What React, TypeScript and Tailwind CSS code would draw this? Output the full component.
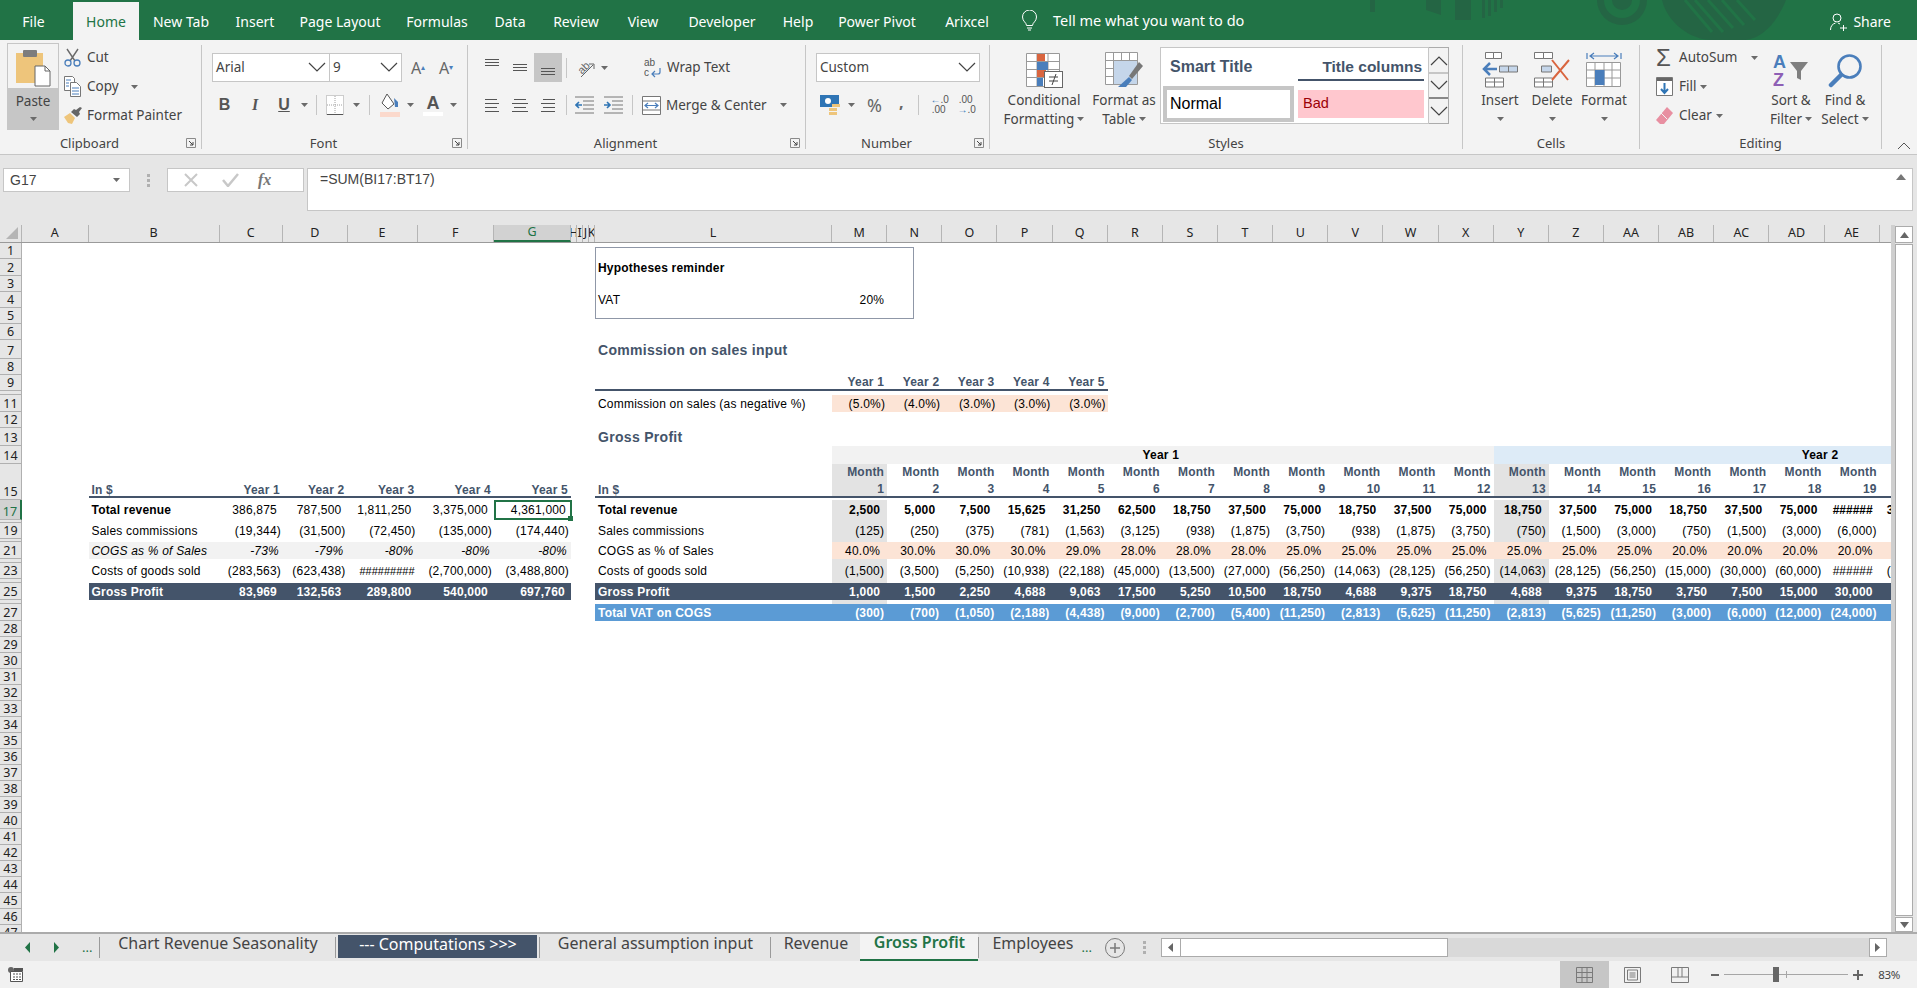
import React from "react";

const UI = "font-['Noto_Sans',sans-serif]";
const COLS =
  "grid grid-cols-[22px_66.5px_131px_63.5px_64.5px_70px_76.5px_77px_6px_6px_6px_6px_237px_repeat(19,55.15px)_1fr]";

const tabs = [
  { label: "New Tab", w: "w-[84px]" },
  { label: "Insert", w: "w-[64px]" },
  { label: "Page Layout", w: "w-[106px]" },
  { label: "Formulas", w: "w-[88px]" },
  { label: "Data", w: "w-[58px]" },
  { label: "Review", w: "w-[74px]" },
  { label: "View", w: "w-[60px]" },
  { label: "Developer", w: "w-[98px]" },
  { label: "Help", w: "w-[54px]" },
  { label: "Power Pivot", w: "w-[104px]" },
  { label: "Arixcel", w: "w-[76px]" },
];

// ---------- small ribbon drawings ----------
const Caret = ({ className = "" }: { className?: string }) => (
  <svg width="7" height="4" viewBox="0 0 7 4" className={`shrink-0 ${className}`}>
    <path d="M0 0h7L3.5 4z" fill="#6a6a6a" />
  </svg>
);

const Chevron = ({ up = false, className = "" }: { up?: boolean; className?: string }) => (
  <svg width="18" height="11" viewBox="0 0 18 11" className={className}>
    <path d={up ? "M1 10 9 2l8 8" : "M1 1l8 8 8-8"} fill="none" stroke="#444" strokeWidth="1.2" />
  </svg>
);

const Lines = ({ rows }: { rows: number[][] }) => (
  <svg width="18" height="18" viewBox="0 0 18 18">
    {rows.map((r, i) => (
      <rect key={i} x={r[0]} y={r[2]} width={r[1] - r[0]} height="1" fill="#555" />
    ))}
  </svg>
);

const Launcher = () => (
  <svg width="10" height="10" viewBox="0 0 10 10">
    <path d="M.5.5h9v9h-9z" fill="none" stroke="#8a8a8a" />
    <path d="M3 3l4 4M7 4v3H4" fill="none" stroke="#444" />
  </svg>
);

const PasteIcon = () => (
  <svg width="36" height="38" viewBox="0 0 36 38">
    <rect x="1" y="4" width="27" height="30" fill="#eec57b" />
    <rect x="8" y="1" width="14" height="7" rx="1" fill="#7d7d7d" />
    <path d="M20 17h10l5 5v15H20z" fill="#fff" stroke="#666" />
    <path d="M30 17v5h5" fill="none" stroke="#666" />
  </svg>
);

const ScissorsIcon = () => (
  <svg width="17" height="19" viewBox="0 0 17 19">
    <path d="M3 1l8 12M14 1 6 13" stroke="#6a6a6a" strokeWidth="1.4" fill="none" />
    <circle cx="4" cy="15" r="3" fill="none" stroke="#4a7ebb" strokeWidth="1.3" />
    <circle cx="13" cy="15" r="3" fill="none" stroke="#4a7ebb" strokeWidth="1.3" />
  </svg>
);

const CopyIcon = () => (
  <svg width="17" height="21" viewBox="0 0 17 21">
    <path d="M.5.5h8l2 2v12H.5z" fill="#fff" stroke="#777" />
    <path d="M6.5 6.5h6l4 4v10h-10z" fill="#fff" stroke="#777" />
    <path d="M2 4h5M2 7h3M2 10h3M8 12h7M8 15h7M8 18h7" stroke="#4a7ebb" />
  </svg>
);

const BrushIcon = () => (
  <svg width="18" height="17" viewBox="0 0 18 17">
    <path d="M0 10l6-4 5 5-3 6-4-1z" fill="#eec57b" />
    <path d="M7 5l3-3 2 1 4-3 2 1-3 4 1 2-3 3z" fill="#666" />
  </svg>
);

const BorderIcon = () => (
  <svg width="18" height="20" viewBox="0 0 18 20">
    <path d="M.5.5h17v19H.5z" fill="#fff" stroke="#a0a0a0" strokeDasharray="1 1" />
    <path d="M9 1v18M1 10h16" stroke="#a0a0a0" strokeDasharray="1 1" />
    <path d="M1 19.5h16" stroke="#555" />
  </svg>
);

const FillIcon = () => (
  <svg width="20" height="24" viewBox="0 0 20 24">
    <path d="M7 1l-5 9 6 6 6-5z" fill="#fff" stroke="#555" />
    <path d="M14 5l4 4v5h-3z" fill="#4a7ebb" />
    <rect y="19" width="20" height="5" fill="#fbd9cc" />
  </svg>
);

const OrientIcon = () => (
  <svg width="20" height="20" viewBox="0 0 20 20">
    <text x="1" y="13" fontSize="11" fill="#666" fontFamily="Liberation Sans" transform="rotate(-45 8 9)">ab</text>
    <path d="M5 19 17 7M13 6h5v5" fill="none" stroke="#666" />
  </svg>
);

const WrapIcon = () => (
  <svg width="17" height="20" viewBox="0 0 17 20">
    <text x="0" y="8" fontSize="10" fill="#555" fontFamily="Liberation Sans">ab</text>
    <text x="0" y="18" fontSize="10" fill="#555" fontFamily="Liberation Sans">c</text>
    <path d="M16 10v4a2 2 0 0 1-2 2H8m3-3-3 3 3 3" fill="none" stroke="#4a7ebb" strokeWidth="1.2" />
  </svg>
);

const MergeIcon = () => (
  <svg width="19" height="19" viewBox="0 0 19 19">
    <path d="M.5.5h18v18H.5zM.5 5h18M.5 14h18" fill="#fff" stroke="#777" />
    <path d="M3 9.5h13M6 7 3 9.5 6 12M13 7l3 2.5-3 2.5" fill="none" stroke="#4a7ebb" strokeWidth="1.2" />
  </svg>
);

const CondIcon = () => (
  <svg width="37" height="35" viewBox="0 0 37 35">
    <path d="M.5.5h33v33H.5zM.5 8.5h33M.5 16.5h33M.5 24.5h33M11 .5v33M22 .5v33" fill="#fff" stroke="#999" />
    <rect x="11" y="1" width="8" height="7" fill="#d9653f" />
    <rect x="11" y="9" width="11" height="8" fill="#4a7ebb" />
    <rect x="11" y="17" width="9" height="7" fill="#d9653f" />
    <rect x="11" y="25" width="6" height="8" fill="#4a7ebb" />
    <rect x="18.5" y="18.5" width="18" height="16" fill="#fff" stroke="#666" />
    <path d="M23 24h9M23 28h9M30 21l-4 11" stroke="#444" />
  </svg>
);

const TableIcon = () => (
  <svg width="38" height="36" viewBox="0 0 38 36">
    <path d="M.5.5h32v32H.5zM.5 8.5h32M.5 16.5h32M.5 24.5h32M8.5.5v32M16.5.5v32M24.5.5v32" fill="#fff" stroke="#999" />
    <rect x="9" y="9" width="23" height="23" fill="#c5d6ea" />
    <path d="M34 10 24 24l3 3 11-13z" fill="#777" />
    <path d="M24 25l3 3-6 7h-8z" fill="#4a7ebb" />
  </svg>
);

const InsertIcon = () => (
  <svg width="36" height="36" viewBox="0 0 36 36">
    <path d="M3.5.5h8v6h-8zM11.5.5h8v6h-8zM3.5 26h18v9h-18zM12.5 26v9M3.5 30h18" fill="#fff" stroke="#777" />
    <path d="M17.5 14h9v6h-9zM26.5 14h9v6h-9z" fill="#c5d6ea" stroke="#777" />
    <path d="M15 17H3M8 11l-6 6 6 6" fill="none" stroke="#4a7ebb" strokeWidth="2.5" />
  </svg>
);

const DeleteIcon = () => (
  <svg width="37" height="36" viewBox="0 0 37 36">
    <path d="M.5.5h9v6h-9zM9.5.5h9v6h-9zM.5 26h18v9H.5zM9.5 26v9M.5 30h18" fill="#fff" stroke="#777" />
    <path d="M7.5 14h10v6h-10z" fill="#c5d6ea" stroke="#777" />
    <path d="M18 8l16 20M35 8 18 28" stroke="#d9653f" strokeWidth="2" />
  </svg>
);

const FormatIcon = () => (
  <svg width="36" height="37" viewBox="0 0 36 37">
    <path d="M1 1v6M35 1v6M4 4h28M8 1 4 4l4 3M28 1l4 3-4 3" fill="none" stroke="#4a7ebb" strokeWidth="1.2" />
    <path d="M.5 10.5h34v24H.5zM.5 18h34M.5 26h34M9 10.5v24M18 10.5v24M26 10.5v24" fill="#fff" stroke="#999" />
    <rect x="9" y="18" width="9.5" height="15" fill="#4a7ebb" />
  </svg>
);

const SortIcon = () => (
  <svg width="36" height="34" viewBox="0 0 36 34">
    <text x="0" y="15" fontSize="18" fontWeight="700" fill="#4a7ebb" fontFamily="Liberation Sans">A</text>
    <text x="0" y="33" fontSize="18" fontWeight="700" fill="#8e5fb5" fontFamily="Liberation Sans">Z</text>
    <path d="M17 9h18l-7 9v9l-4-2v-7z" fill="#7f7f7f" />
  </svg>
);

const SearchIcon = () => (
  <svg width="35" height="35" viewBox="0 0 35 35">
    <circle cx="21.5" cy="13.5" r="11" fill="none" stroke="#4a7ebb" strokeWidth="2.6" />
    <path d="M13 22 3 32" stroke="#4a7ebb" strokeWidth="4.5" strokeLinecap="round" />
  </svg>
);

const FillDownIcon = () => (
  <svg width="17" height="19" viewBox="0 0 17 19">
    <path d="M.5.5h16v18H.5z" fill="#fff" stroke="#777" />
    <rect x="1" y="1" width="15" height="3" fill="#666" />
    <path d="M8.5 6v10M5 12l3.5 4 3.5-4" fill="none" stroke="#2f75b5" strokeWidth="2" />
  </svg>
);

const EraserIcon = () => (
  <svg width="17" height="17" viewBox="0 0 17 17">
    <path d="M11 0l6 6-9 11H4l-4-4z" fill="#e88fa1" />
    <path d="M5 6l6 6" stroke="#f3f3f3" />
  </svg>
);

const BigAction = ({ icon, l1, l2, caret, w }: { icon: React.ReactNode; l1: string; l2?: string; caret?: boolean; w: string }) => (
  <div className={`${w} pt-[5px] flex flex-col items-center`}>
    <div className="h-[40px] flex items-center">{icon}</div>
    <div className="h-[20px] leading-[20px] whitespace-nowrap">{l1}</div>
    <div className="h-[18px] flex items-center justify-center gap-[3px] whitespace-nowrap">
      {l2}
      {caret && <Caret />}
    </div>
  </div>
);

const Group = ({ w, label, launcher, children }: { w: string; label: string; launcher?: boolean; children: React.ReactNode }) => (
  <div className={`${w} shrink-0 h-full py-[5px]`}>
    <div className="h-full flex flex-col border-r border-[#c6c6c6]">
      <div className="flex-1">{children}</div>
      <div className={`relative h-[14px] -mb-[2px] flex items-center justify-center text-[13px] text-[#444] ${launcher ? "pr-[22px]" : ""}`}>
        {label}
        {launcher && (
          <span className="absolute right-[5px] top-[1px]">
            <Launcher />
          </span>
        )}
      </div>
    </div>
  </div>
);

const Ribbon = () => (
  <div className={`${UI} flex h-[115px] bg-[#f3f3f3] border-b border-[#c6c6c6] text-[13.5px] text-[#444]`}>
    <Group w="w-[202px]" label="Clipboard" launcher>
      <div className="flex pl-[7px] -mt-[2px]">
        <div className="w-[52px] h-[87px] flex flex-col">
          <div className="h-[45px] border border-[#c6c6c6] border-b-0 flex items-center justify-center pt-[3px]">
            <PasteIcon />
          </div>
          <div className="flex-1 bg-[#c6c6c6] flex flex-col items-center pt-[3px]">
            <span className="leading-[20px]">Paste</span>
            <Caret className="mt-[6px]" />
          </div>
        </div>
        <div className="ml-[5px] flex flex-col">
          <div className="h-[29px] flex items-center">
            <span className="w-[23px]"><ScissorsIcon /></span>Cut
          </div>
          <div className="h-[29px] flex items-center">
            <span className="w-[23px]"><CopyIcon /></span>Copy<Caret className="ml-[12px]" />
          </div>
          <div className="h-[29px] flex items-center">
            <span className="w-[23px]"><BrushIcon /></span>Format Painter
          </div>
        </div>
      </div>
    </Group>

    <Group w="w-[266px]" label="Font" launcher>
      <div className="flex items-center pl-[10px] pt-[8px]">
        <div className="w-[118px] h-[29px] bg-white border border-[#c6c6c6] flex items-center justify-between pl-[3px] pr-[3px]">
          Arial<Chevron />
        </div>
        <div className="w-[72px] h-[29px] bg-white border border-l-0 border-[#c6c6c6] flex items-center justify-between pl-[3px] pr-[3px]">
          9<Chevron />
        </div>
        <span className="ml-[9px] w-[22px] text-[16px] leading-none text-[#666]">A<sup className="text-[#4a7ebb] text-[8px]">▴</sup></span>
        <span className="ml-[6px] text-[16px] leading-none text-[#666]">A<sup className="text-[#4a7ebb] text-[8px]">▾</sup></span>
      </div>
      <div className="flex items-center h-[28px] mt-[9px] pl-[10px] text-[16px]">
        <b className="w-[25px] text-center font-['Liberation_Sans',sans-serif] text-[#555]">B</b>
        <i className="w-[36px] text-center font-['Liberation_Serif',serif] font-bold text-[#555]">I</i>
        <u className="w-[22px] text-center font-['Liberation_Sans',sans-serif] font-bold text-[#555]">U</u>
        <Caret className="ml-[6px]" />
        <span className="ml-[8px] w-px h-[20px] bg-[#c6c6c6]" />
        <span className="ml-[9px]"><BorderIcon /></span>
        <Caret className="ml-[9px]" />
        <span className="ml-[9px] w-px h-[20px] bg-[#c6c6c6]" />
        <span className="ml-[10px]"><FillIcon /></span>
        <Caret className="ml-[7px]" />
        <span className="ml-[9px] flex flex-col items-center w-[20px]">
          <b className="font-['Liberation_Sans',sans-serif] text-[18px] leading-[18px] text-[#555]">A</b>
          <span className="w-[20px] h-[4px] bg-white" />
        </span>
        <Caret className="ml-[7px]" />
      </div>
    </Group>

    <Group w="w-[338px]" label="Alignment" launcher>
      <div className="flex items-center pl-[15px] pt-[8px] h-[37px]">
        <span className="w-[28px] -mt-[3px]"><Lines rows={[[2, 16, 2], [2, 16, 5], [2, 16, 8]]} /></span>
        <span className="w-[28px]"><Lines rows={[[2, 16, 5], [2, 16, 8], [2, 16, 11]]} /></span>
        <span className="-ml-[5px] w-[28px] h-[29px] bg-[#c6c6c6] flex items-center justify-center pt-[3px]"><Lines rows={[[2, 16, 8], [2, 16, 11], [2, 16, 14]]} /></span>
        <span className="ml-[4px] w-px h-[20px] bg-[#c6c6c6]" />
        <span className="ml-[9px]"><OrientIcon /></span>
        <Caret className="ml-[5px]" />
        <span className="ml-[36px]"><WrapIcon /></span>
        <span className="ml-[6px]">Wrap Text</span>
      </div>
      <div className="flex items-center h-[28px] mt-[9px] pl-[15px]">
        <span className="w-[28px]"><Lines rows={[[2, 14, 3], [2, 16, 7], [2, 14, 11], [2, 16, 15]]} /></span>
        <span className="w-[28px]"><Lines rows={[[3, 15, 3], [1, 17, 7], [3, 15, 11], [1, 17, 15]]} /></span>
        <span className="w-[26px]"><Lines rows={[[4, 16, 3], [2, 16, 7], [4, 16, 11], [2, 16, 15]]} /></span>
        <span className="ml-[1px] w-px h-[20px] bg-[#c6c6c6]" />
        <span className="ml-[8px]">
          <svg width="19" height="18" viewBox="0 0 19 18"><path d="M0 1h19M8 5h11M8 9h11M8 13h11M0 17h19" stroke="#777" /><path d="M7 9H1m3-3L1 9l3 3" fill="none" stroke="#2f75b5" strokeWidth="1.6" /></svg>
        </span>
        <span className="ml-[9.5px]">
          <svg width="19" height="18" viewBox="0 0 19 18"><path d="M0 1h19M8 5h11M8 9h11M8 13h11M0 17h19" stroke="#777" /><path d="M0 9h6m-3-3 3 3-3 3" fill="none" stroke="#2f75b5" strokeWidth="1.6" /></svg>
        </span>
        <span className="ml-[9.5px] w-px h-[20px] bg-[#c6c6c6]" />
        <span className="ml-[9px]"><MergeIcon /></span>
        <span className="ml-[5px]">Merge &amp; Center</span>
        <Caret className="ml-[13px]" />
      </div>
    </Group>

    <Group w="w-[184px]" label="Number" launcher>
      <div className="pl-[10px] pt-[8px]">
        <div className="w-[164px] h-[29px] bg-white border border-[#c6c6c6] flex items-center justify-between pl-[3px] pr-[3px]">
          Custom<Chevron />
        </div>
      </div>
      <div className="flex items-center h-[28px] mt-[9px] pl-[14px]">
        <svg width="20" height="20" viewBox="0 0 20 20"><rect width="19" height="12" fill="#2f75b5" /><circle cx="8" cy="6" r="3" fill="#fff" /><rect x="12" y="9" width="8" height="3" fill="#eec57b" /><rect x="9" y="13" width="8" height="3" fill="#eec57b" /><rect x="9" y="17" width="8" height="3" fill="#eec57b" /></svg>
        <Caret className="ml-[8px]" />
        <span className="ml-[12px] text-[18px] text-[#666]">%</span>
        <span className="ml-[17px] text-[16px] font-bold text-[#666] -mt-[6px]">,</span>
        <span className="ml-[14px] w-px h-[20px] bg-[#c6c6c6]" />
        <span className="ml-[12px] w-[15px] font-['Liberation_Sans',sans-serif] text-[10px] leading-[10px] text-[#555] text-right"><span className="text-[#2f75b5] font-bold">←</span>.0<br />.00</span>
        <span className="ml-[12px] w-[15px] font-['Liberation_Sans',sans-serif] text-[10px] leading-[10px] text-[#555] text-right">.00<br /><span className="text-[#2f75b5] font-bold">→</span>.0</span>
      </div>
    </Group>

    <Group w="w-[473px]" label="Styles">
      <div className="flex">
        <BigAction w="w-[108px]" icon={<CondIcon />} l1="Conditional" l2="Formatting" caret />
        <div className="-ml-[13px] w-[78px]"><BigAction w="w-[78px]" icon={<TableIcon />} l1="Format as" l2="Table" caret /></div>
        <div className="-ml-[3px] mt-[2px] flex">
          <div className="w-[269px] h-[77px] bg-white border border-[#c6c6c6] grid grid-cols-[137px_126px] grid-rows-[38px_37px] font-['Liberation_Sans',sans-serif]">
            <div className="pl-[9px] flex items-center font-bold text-[#44546a] text-[16px]">Smart Title</div>
            <div className="flex items-end justify-end pr-[2px] pb-[3px] font-bold text-[#44546a] text-[15.5px] leading-[18px] border-b-2 border-[#44546a] mb-[5px]">Title columns</div>
            <div className="ml-[2px] mr-[4px] mb-[1px] border-4 border-[#c6c6c6] pl-[3px] flex items-center text-[16px] text-black">Normal</div>
            <div className="mb-[5px] mt-[4px] bg-[#ffc7ce] text-[#9c0006] pl-[5px] flex items-center text-[14.5px]">Bad</div>
          </div>
          <div className="w-[20px] h-[77px] flex flex-col border border-l-0 border-[#ababab]">
            <div className="h-[26px] flex items-center justify-center border-b-2 border-[#c6c6c6] bg-[#f3f3f3]"><Chevron up /></div>
            <div className="h-[24px] flex items-center justify-center border-b border-[#888] bg-[#f3f3f3]"><Chevron /></div>
            <div className="flex-1 flex items-center justify-center border-t border-[#888] bg-[#f3f3f3]"><Chevron /></div>
          </div>
        </div>
      </div>
    </Group>

    <Group w="w-[177px]" label="Cells">
      <div className="flex pl-[11px]">
        <BigAction w="w-[52px]" icon={<InsertIcon />} l1="Insert" caret />
        <BigAction w="w-[52px]" icon={<DeleteIcon />} l1="Delete" caret />
        <BigAction w="w-[52px]" icon={<FormatIcon />} l1="Format" caret />
      </div>
    </Group>

    <Group w="w-[242px]" label="Editing">
      <div className="flex">
        <div className="ml-[16px] w-[108px] -mt-[2px] flex flex-col whitespace-nowrap">
          <div className="h-[29px] flex items-center"><span className="w-[23px] text-[24px] leading-none text-[#555] font-['Liberation_Sans',sans-serif]">Σ</span>AutoSum<Caret className="ml-[14px]" /></div>
          <div className="h-[29px] flex items-center"><span className="w-[23px]"><FillDownIcon /></span>Fill<Caret className="ml-[4px]" /></div>
          <div className="h-[29px] flex items-center"><span className="w-[23px]"><EraserIcon /></span>Clear<Caret className="ml-[4px]" /></div>
        </div>
        <BigAction w="w-[54px]" icon={<SortIcon />} l1="Sort &" l2="Filter" caret />
        <BigAction w="w-[54px]" icon={<SearchIcon />} l1="Find &" l2="Select" caret />
      </div>
    </Group>

    <div className="flex-1 flex items-end justify-end pr-[6px] pb-[4px]">
      <svg width="14" height="8" viewBox="0 0 14 8"><path d="M1 7l6-6 6 6" fill="none" stroke="#555" /></svg>
    </div>
  </div>
);

const TitleBar = () => (
  <div className={`${UI} relative h-[40px] bg-[#217346] text-white text-[14px] overflow-hidden flex items-end`}>
    {/* faint artwork behind the tabs */}
    <svg className="absolute left-0 top-0" width="1917" height="40" viewBox="0 0 1917 40" fill="#246544">
      <rect x="1370" y="0" width="5" height="12" />
      <path d="M1426 0v10l15 5V0z" />
      <rect x="1455" y="0" width="16" height="20" />
      <rect x="1482" y="0" width="3" height="18" />
      <rect x="1488" y="0" width="3" height="16" />
      <rect x="1494" y="0" width="3" height="12" />
      <rect x="1500" y="0" width="3" height="8" />
      <path d="M1597 0a25 25 0 0 0 50 0h-7a18 18 0 0 1-36 0z" />
      <path d="M1612 0a10 10 0 0 0 20 0z" />
      <path d="M1662 0c5 22 28 40 50 40h30c20 0 35-18 44-40z" />
      <g stroke="#217346" strokeWidth="3">
        <path d="M1685 0l27 32M1695 0l28 32M1708 0l25 28M1722 0l22 25M1737 0l18 20" />
      </g>
    </svg>
    <div className="relative flex items-end h-[38px]">
      <div className="w-[67px] mr-[6px] h-[38px] flex items-center justify-center">File</div>
      <div className="w-[66px] h-[38px] bg-[#f3f3f3] text-[#217346] flex items-center justify-center">Home</div>
      {tabs.map((t) => (
        <div key={t.label} className={`${t.w} h-[38px] flex items-center justify-center`}>{t.label}</div>
      ))}
      <svg className="ml-[17px] mb-[9px]" width="15" height="21" viewBox="0 0 15 21" fill="none" stroke="#fff">
        <path d="M4.5 15.5c0-3-4-4-4-8.5a7 7 0 0 1 14 0c0 4.5-4 5.5-4 8.5zM5 18h5M6 20h3" />
      </svg>
      <div className="ml-[16px] h-[38px] flex items-center text-[14.5px]">Tell me what you want to do</div>
    </div>
    <div className="relative ml-auto mr-[26px] mb-[8px] flex items-center gap-[6px]">
      <svg width="17" height="18" viewBox="0 0 17 18" fill="none" stroke="#fff">
        <circle cx="7" cy="5" r="4" />
        <path d="M.5 17c0-4 2-6 5-7M8 10l2 1M10 15h7M13.5 12v6" />
      </svg>
      Share
    </div>
  </div>
);

const FormulaBar = () => (
  <div className="h-[70px] bg-[#e6e6e6] flex items-start pt-[13px] pl-[3px]">
    <div className="w-[127px] h-[24px] bg-white border border-[#c6c6c6] flex items-center justify-between pl-[6px] pr-[9px] text-[14px] text-[#444] font-['Liberation_Sans',sans-serif]">
      G17<Caret />
    </div>
    <div className="w-[37px] h-[24px] flex flex-col items-center justify-center gap-[2px]">
      <span className="w-[3px] h-[3px] bg-[#b0b0b0]" />
      <span className="w-[3px] h-[3px] bg-[#b0b0b0]" />
      <span className="w-[3px] h-[3px] bg-[#b0b0b0]" />
    </div>
    <div className="w-[137px] h-[24px] bg-white border border-[#c6c6c6] flex items-center">
      <svg className="ml-[16px]" width="14" height="14" viewBox="0 0 14 14"><path d="M1 1l12 12M13 1 1 13" stroke="#c8c8c8" strokeWidth="2" /></svg>
      <svg className="ml-[24px]" width="17" height="14" viewBox="0 0 17 14"><path d="M1 7l5 6L16 1" fill="none" stroke="#c8c8c8" strokeWidth="2.5" /></svg>
      <i className="ml-[19px] font-['Liberation_Serif',serif] font-bold text-[16px] leading-none text-[#777]">fx</i>
    </div>
    <div className="ml-[3px] w-[1606px] h-[43px] bg-white border border-[#c6c6c6] flex justify-between pl-[12px] pr-[6px] font-['Liberation_Sans',sans-serif] text-[14px] text-[#444]">
      =SUM(BI17:BT17)
      <svg className="mt-[5px]" width="10" height="6" viewBox="0 0 10 6"><path d="M0 6l5-6 5 6z" fill="#777" /></svg>
    </div>
  </div>
);

const colLabels = ["A", "B", "C", "D", "E", "F", "G", "H", "I", "J", "K", "L", "M", "N", "O", "P", "Q", "R", "S", "T", "U", "V", "W", "X", "Y", "Z", "AA", "AB", "AC", "AD", "AE"];

const ColHeader = () => (
  <div className={`${COLS} ${UI} h-[18px] bg-[#e6e6e6] border-b border-[#9a9a9a] text-[12.5px] text-[#222]`}>
    <div className="border-r border-[#b5b5b5] flex items-end justify-end pr-[3px] pb-[3px]">
      <svg width="12" height="12" viewBox="0 0 12 12"><path d="M12 0v12H0z" fill="#b5b5b5" /></svg>
    </div>
    {colLabels.map((c) => (
      <div key={c} className={`flex items-center justify-center overflow-hidden border-r border-[#b5b5b5] ${c === "G" ? "bg-[#d2d2d2] text-[#217346] border-b-2 border-b-[#217346]" : ""}`}>{c}</div>
    ))}
    <div />
  </div>
);

// ---------- one sheet row ----------
const Row = ({ n, h, sel, className = "", children }: { n: number; h: string; sel?: boolean; className?: string; children?: React.ReactNode }) => (
  <div className={`${COLS} ${h} ${className} overflow-hidden`}>
    <div className={`${UI} h-full overflow-hidden flex items-end justify-center border-b border-r text-[12.5px] leading-[15px] tracking-normal ${sel ? "bg-[#d2d2d2] text-[#217346] border-b-[#b5b5b5] border-r-2 border-r-[#217346]" : "bg-[#e6e6e6] text-[#222] border-[#b0b0b0]"}`}>
      {n}
    </div>
    {children}
  </div>
);

const NUM = "flex items-end justify-end whitespace-nowrap leading-[14px]";
const LBL = "flex items-end pl-[3px] whitespace-nowrap leading-[14px]";

const gray = (i: number) => i === 0 || i === 12;

const months = Array.from({ length: 19 }, (_, i) => i + 1);
const revenue = ["2,500", "5,000", "7,500", "15,625", "31,250", "62,500", "18,750", "37,500", "75,000", "18,750", "37,500", "75,000", "18,750", "37,500", "75,000", "18,750", "37,500", "75,000"];
const commissions = ["(125)", "(250)", "(375)", "(781)", "(1,563)", "(3,125)", "(938)", "(1,875)", "(3,750)", "(938)", "(1,875)", "(3,750)", "(750)", "(1,500)", "(3,000)", "(750)", "(1,500)", "(3,000)", "(6,000)"];
const pct = ["40.0%", "30.0%", "30.0%", "30.0%", "29.0%", "28.0%", "28.0%", "28.0%", "25.0%", "25.0%", "25.0%", "25.0%", "25.0%", "25.0%", "25.0%", "20.0%", "20.0%", "20.0%", "20.0%"];
const cogs = ["(1,500)", "(3,500)", "(5,250)", "(10,938)", "(22,188)", "(45,000)", "(13,500)", "(27,000)", "(56,250)", "(14,063)", "(28,125)", "(56,250)", "(14,063)", "(28,125)", "(56,250)", "(15,000)", "(30,000)", "(60,000)"];
const gross = ["1,000", "1,500", "2,250", "4,688", "9,063", "17,500", "5,250", "10,500", "18,750", "4,688", "9,375", "18,750", "4,688", "9,375", "18,750", "3,750", "7,500", "15,000", "30,000"];
const vat = ["(300)", "(700)", "(1,050)", "(2,188)", "(4,438)", "(9,000)", "(2,700)", "(5,400)", "(11,250)", "(2,813)", "(5,625)", "(11,250)", "(2,813)", "(5,625)", "(11,250)", "(3,000)", "(6,000)", "(12,000)", "(24,000)"];

// thin hidden rows still show the grey month columns
const Tiny = ({ n, h }: { n: number; h: string }) => (
  <Row n={n} h={h}>
    <div className="col-start-14 bg-[#e3e3e3]" />
    <div className="col-start-26 bg-[#e3e3e3]" />
  </Row>
);

const Sheet = () => (
  <div className="relative w-[1891px] h-[689px] overflow-hidden bg-white font-['Liberation_Sans',sans-serif] text-[12px] tracking-[0.2px] text-black">
    {/* floating text box */}
    <div className="absolute left-[595px] top-[4px] w-[319px] h-[72px] border border-[#8f97a7] pointer-events-none" />

    <Row n={1} h="h-[16px]" />
    <Row n={2} h="h-[17px]"><div className={`col-start-13 font-bold ${LBL} pb-[1px]`}>Hypotheses reminder</div></Row>
    <Row n={3} h="h-[16px]" />
    <Row n={4} h="h-[16px]">
      <div className={`col-start-13 ${LBL} pb-[1px]`}>VAT</div>
      <div className={`${NUM} pr-[3px] pb-[1px]`}>20%</div>
    </Row>
    <Row n={5} h="h-[16px]" />
    <Row n={6} h="h-[16px]" />
    <Row n={7} h="h-[18.5px]"><div className={`col-start-13 flex items-end pl-[3px] whitespace-nowrap text-[14px] font-bold text-[#44546a] leading-[17px] tracking-[0.3px]`}>Commission on sales input</div></Row>
    <Row n={8} h="h-[16px]" />
    <Row n={9} h="h-[16.5px]">
      <div className="col-start-13 border-b-2 border-[#44546a]" />
      {["Year 1", "Year 2", "Year 3", "Year 4", "Year 5"].map((y) => (
        <div key={y} className={`${NUM} pr-[3px] font-bold text-[#44546a] border-b-2 border-[#44546a]`}>{y}</div>
      ))}
    </Row>
    <Row n={10} h="h-[4px]" />
    <Row n={11} h="h-[16.5px]">
      <div className={`col-start-13 ${LBL} pb-[1px]`}>Commission on sales (as negative %)</div>
      {["(5.0%)", "(4.0%)", "(3.0%)", "(3.0%)", "(3.0%)"].map((v, i) => (
        <div key={i} className={`${NUM} pr-[2px] pb-[1px] bg-[#fce4d6]`}>{v}</div>
      ))}
    </Row>
    <Row n={12} h="h-[16px]" />
    <Row n={13} h="h-[18.5px]"><div className={`col-start-13 flex items-end pl-[3px] whitespace-nowrap text-[14px] font-bold text-[#44546a] leading-[18px] tracking-[0.3px]`}>Gross Profit</div></Row>
    <Row n={14} h="h-[17.5px]">
      <div className="col-start-14 col-span-12 bg-[#f2f2f2] flex items-center justify-center pr-[4px] font-bold">Year 1</div>
      <div className="col-span-8 bg-[#ddebf7] flex items-center pl-[308px] font-bold">Year 2</div>
    </Row>
    <Row n={15} h="h-[32px]">
      <div className={`col-start-3 ${LBL} pb-[3px] font-bold text-[#44546a]`}>In $</div>
      {["Year 1", "Year 2", "Year 3", "Year 4", "Year 5"].map((y) => (
        <div key={y} className={`${NUM} pr-[3px] pb-[3px] font-bold text-[#44546a]`}>{y}</div>
      ))}
      <div className={`col-start-13 ${LBL} pb-[3px] font-bold text-[#44546a]`}>In $</div>
      {months.map((m, i) => (
        <div key={m} className={`flex flex-col items-end justify-end pr-[3px] pb-[2px] leading-[17px] font-bold text-[#44546a] ${gray(i) ? "bg-[#e3e3e3]" : ""}`}>
          <span>Month</span>
          <span>{m}</span>
        </div>
      ))}
    </Row>
    <Row n={16} h="h-[4.5px]">
      <div className="col-start-3 col-span-6 border-t-2 border-[#44546a]" />
      <div className="col-start-13 col-span-21 border-t-2 border-[#44546a]" />
    </Row>
    <Row n={17} h="h-[19.5px]" sel className="!overflow-visible">
      <div className={`col-start-3 ${LBL} pb-[3px] font-bold`}>Total revenue</div>
      {["386,875", "787,500", "1,811,250", "3,375,000"].map((v) => (
        <div key={v} className={`${NUM} pr-[6px] pb-[3px]`}>{v}</div>
      ))}
      <div className="relative -mr-[1px] flex items-center justify-end pr-[4px] border-2 border-[#217346] leading-[14px]">
        4,361,000
        <span className="absolute -right-[3px] -bottom-[3px] w-[5px] h-[5px] bg-[#217346]" />
      </div>
      <div className={`col-start-13 ${LBL} pb-[3px] font-bold`}>Total revenue</div>
      {revenue.map((v, i) => (
        <div key={i} className={`${NUM} pr-[7px] pb-[3px] font-bold ${gray(i) ? "bg-[#e3e3e3]" : ""}`}>{v}</div>
      ))}
      <div className={`${NUM} pr-[7px] pb-[3px] font-bold tracking-normal`}>######</div>
      <div className={`flex items-end overflow-hidden pl-[7px] pb-[3px] font-bold leading-[14px]`}>3</div>
    </Row>
    <Tiny n={18} h="h-[3px]" />
    <Row n={19} h="h-[16px]">
      <div className={`col-start-3 ${LBL} pb-[1px]`}>Sales commissions</div>
      {["(19,344)", "(31,500)", "(72,450)", "(135,000)", "(174,440)"].map((v) => (
        <div key={v} className={`${NUM} pr-[2px] pb-[1px]`}>{v}</div>
      ))}
      <div className={`col-start-13 ${LBL} pb-[1px]`}>Sales commissions</div>
      {commissions.map((v, i) => (
        <div key={i} className={`${NUM} pr-[3px] pb-[1px] ${gray(i) ? "bg-[#e3e3e3]" : ""}`}>{v}</div>
      ))}
    </Row>
    <Tiny n={20} h="h-[3.5px]" />
    <Row n={21} h="h-[16.5px]">
      <div className={`col-start-3 ${LBL} pb-[1px] italic bg-[#f2f2f2]`}>COGS as % of Sales</div>
      {["-73%", "-79%", "-80%", "-80%", "-80%"].map((v, i) => (
        <div key={i} className={`${NUM} pr-[4px] pb-[1px] italic bg-[#f2f2f2]`}>{v}</div>
      ))}
      <div className={`col-start-13 ${LBL} pb-[1px]`}>COGS as % of Sales</div>
      {pct.map((v, i) => (
        <div key={i} className={`${NUM} pr-[7px] pb-[1px] bg-[#fce4d6]`}>{v}</div>
      ))}
      <div className="bg-[#fce4d6]" />
    </Row>
    <Tiny n={22} h="h-[4px]" />
    <Row n={23} h="h-[16px]">
      <div className={`col-start-3 ${LBL} pb-[1px]`}>Costs of goods sold</div>
      <div className={`${NUM} pr-[2px] pb-[1px]`}>(283,563)</div>
      <div className={`${NUM} pr-[2px] pb-[1px]`}>(623,438)</div>
      <div className={`${NUM} pr-[3px] pb-[1px] text-[11px] tracking-normal`}>#########</div>
      <div className={`${NUM} pr-[2px] pb-[1px]`}>(2,700,000)</div>
      <div className={`${NUM} pr-[2px] pb-[1px]`}>(3,488,800)</div>
      <div className={`col-start-13 ${LBL} pb-[1px]`}>Costs of goods sold</div>
      {cogs.map((v, i) => (
        <div key={i} className={`${NUM} pr-[3px] pb-[1px] ${gray(i) ? "bg-[#e3e3e3]" : ""}`}>{v}</div>
      ))}
      <div className={`${NUM} pr-[7px] pb-[1px] tracking-normal`}>######</div>
      <div className={`flex items-end overflow-hidden pl-[7px] pb-[1px] leading-[14px]`}>(3</div>
    </Row>
    <Tiny n={24} h="h-[4px]" />
    <Row n={25} h="h-[17px]">
      <div className={`col-start-3 ${LBL} pb-[1px] bg-[#44546a] text-white font-bold`}>Gross Profit</div>
      {["83,969", "132,563", "289,800", "540,000", "697,760"].map((v) => (
        <div key={v} className={`${NUM} pr-[6px] pb-[1px] bg-[#44546a] text-white font-bold`}>{v}</div>
      ))}
      <div className={`col-start-13 ${LBL} pb-[1px] bg-[#44546a] text-white font-bold`}>Gross Profit</div>
      {gross.map((v, i) => (
        <div key={i} className={`${NUM} pr-[7px] pb-[1px] bg-[#44546a] text-white font-bold`}>{v}</div>
      ))}
      <div className="bg-[#44546a]" />
    </Row>
    <Tiny n={26} h="h-[4px]" />
    <Row n={27} h="h-[17.5px]">
      <div className={`col-start-13 ${LBL} pb-[1px] bg-[#5b9bd5] text-white font-bold`}>Total VAT on COGS</div>
      {vat.map((v, i) => (
        <div key={i} className={`${NUM} pr-[3px] pb-[1px] bg-[#5b9bd5] text-white font-bold`}>{v}</div>
      ))}
      <div className="bg-[#5b9bd5]" />
    </Row>
    {Array.from({ length: 20 }, (_, i) => (
      <Row key={i} n={28 + i} h="h-[16px]" />
    ))}
  </div>
);

const VScroll = () => (
  <div className="w-[26px] h-[707px] -mt-[18px] bg-[#e6e6e6] flex flex-col items-center border-l-[4px] border-[#cfcfcf] pr-[4px]">
    <div className="w-[18px] h-[17px] mt-[1px] bg-white border border-[#ababab] flex items-center justify-center">
      <svg width="9" height="6" viewBox="0 0 9 6"><path d="M0 6l4.5-6L9 6z" fill="#666" /></svg>
    </div>
    <div className="w-[18px] flex-1 my-[1px] bg-white border border-[#ababab]" />
    <div className="w-[18px] h-[15px] bg-white border border-[#ababab] flex items-center justify-center">
      <svg width="9" height="6" viewBox="0 0 9 6"><path d="M0 0l4.5 6L9 0z" fill="#666" /></svg>
    </div>
  </div>
);

const sep = "w-px h-[21px] bg-[#9a9a9a]";

const SheetTabs = () => (
  <div className={`${UI} h-[29px] bg-[#e6e6e6] border-t-2 border-[#ababab] flex items-center text-[16px] text-[#444]`}>
    <svg className="ml-[25px]" width="5" height="11" viewBox="0 0 5 11"><path d="M5 0v11L0 5.5z" fill="#217346" /></svg>
    <svg className="ml-[24px]" width="5" height="11" viewBox="0 0 5 11"><path d="M0 0v11l5-5.5z" fill="#217346" /></svg>
    <span className="ml-[23px] text-[13px] leading-none text-[#217346]">...</span>
    <span className={`ml-[7px] ${sep}`} />
    <span className="w-[235px] text-center pb-[10px]">Chart Revenue Seasonality</span>
    <span className={sep} />
    <div className="ml-[2px] -mt-[2px] w-[199px] h-[23px] bg-[#44546a] text-white flex items-center justify-center pb-[6px]">--- Computations &gt;&gt;&gt;</div>
    <span className={`ml-[2px] ${sep}`} />
    <span className="w-[230px] text-center pb-[10px]">General assumption input</span>
    <span className={sep} />
    <span className="w-[89px] text-center pb-[10px]">Revenue</span>
    <div className="w-[118px] h-[27px] -mt-[1px] bg-[#f3f3f3] border-b-2 border-[#217346] text-[#217346] font-semibold flex items-center justify-center pb-[8px]">Gross Profit</div>
    <span className={sep} />
    <span className="ml-[13px] w-[81px] whitespace-nowrap pb-[10px]">Employees</span>
    <span className="ml-[8px] text-[13px] leading-none text-[#217346]">...</span>
    <svg className="ml-[13px]" width="20" height="20" viewBox="0 0 20 20" fill="none" stroke="#7a7a7a"><circle cx="10" cy="10" r="9.5" /><path d="M10 5v10M5 10h10" strokeWidth="1.5" /></svg>
    <span className="ml-[18px] flex flex-col gap-[2px]">
      <span className="w-[3px] h-[3px] bg-[#b0b0b0]" />
      <span className="w-[3px] h-[3px] bg-[#b0b0b0]" />
      <span className="w-[3px] h-[3px] bg-[#b0b0b0]" />
    </span>
    <div className="ml-[15px] w-[726px] h-[19px] bg-[#d9d9d9] flex">
      <div className="w-[20px] bg-white border border-[#ababab] flex items-center justify-center">
        <svg width="5" height="9" viewBox="0 0 5 9"><path d="M5 0v9L0 4.5z" fill="#666" /></svg>
      </div>
      <div className="w-[267px] bg-white border border-l-0 border-[#ababab]" />
      <div className="ml-auto w-[18px] bg-white border border-[#ababab] flex items-center justify-center">
        <svg width="5" height="9" viewBox="0 0 5 9"><path d="M0 0v9l5-4.5z" fill="#666" /></svg>
      </div>
    </div>
  </div>
);

const StatusBar = () => (
  <div className={`${UI} flex-1 bg-[#f1f1f1] flex items-center text-[12px] text-[#444]`}>
    <svg className="ml-[8px]" width="15" height="15" viewBox="0 0 15 15">
      <circle cx="3" cy="3" r="3" fill="#666" />
      <path d="M2.5 4.5h12v10h-12z" fill="#fff" stroke="#555" />
      <rect x="6" y="1" width="9" height="3" fill="#555" />
      <path d="M5 7h2M8 7h2M11 7h2M5 10h2M8 10h2M11 10h2M5 12.5h2M8 12.5h2M11 12.5h2" stroke="#555" />
    </svg>
    <div className="ml-auto w-[49px] self-stretch bg-[#c6c6c6] flex items-center justify-center">
      <svg width="17" height="16" viewBox="0 0 17 16"><path d="M.5.5h16v15H.5zM.5 5.5h16M.5 10.5h16M6 .5v15M11 .5v15" fill="none" stroke="#7a7a7a" /></svg>
    </div>
    <svg className="ml-[15px]" width="17" height="16" viewBox="0 0 17 16" fill="none" stroke="#7a7a7a"><path d="M.5.5h16v15H.5z" /><path d="M3.5 3h10v10h-10zM5.5 6h6M5.5 8h6M5.5 10h6" /></svg>
    <svg className="ml-[30px]" width="18" height="16" viewBox="0 0 18 16" fill="none" stroke="#7a7a7a"><path d="M.5.5h17v15H.5zM.5 10h17M7 .5V10M11 .5V10" /></svg>
    <span className="ml-[22px] w-[8px] h-[2px] bg-[#666]" />
    <div className="relative ml-[5px] w-[124px] h-[1px] bg-[#a6a6a6]">
      <span className="absolute left-[49px] -top-[7px] w-[6px] h-[15px] bg-[#666]" />
      <span className="absolute left-[62px] -top-[3px] w-px h-[7px] bg-[#a6a6a6]" />
    </div>
    <svg className="ml-[5px]" width="10" height="10" viewBox="0 0 10 10"><path d="M4 0h2v4h4v2H6v4H4V6H0V4h4z" fill="#666" /></svg>
    <span className="ml-[15px] mr-[17px] text-[11.5px] tracking-[-0.3px]">83%</span>
  </div>
);

export default function App() {
  return (
    <div className="w-[1917px] h-[988px] flex flex-col overflow-hidden bg-white">
      <TitleBar />
      <Ribbon />
      <FormulaBar />
      <ColHeader />
      <div className="flex">
        <Sheet />
        <VScroll />
      </div>
      <SheetTabs />
      <StatusBar />
    </div>
  );
}
